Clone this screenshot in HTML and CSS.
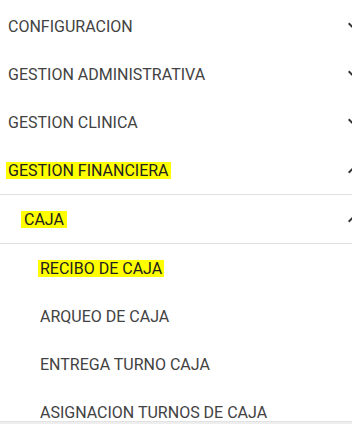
FILE: index.html
```html
<!DOCTYPE html>
<html lang="es">
<head>
    <meta charset="UTF-8">
    <meta name="viewport" content="width=device-width, initial-scale=1.0">
    <title>Menu</title>
    <link rel="stylesheet" href="styles.css">
</head>
<body>

<div class="viewport">
    <nav class="menu">
        <div class="item">
            <span class="label">CONFIGURACION</span>
            <svg class="chevron" viewBox="0 0 24 24"><path d="M16.59 8.59L12 13.17 7.41 8.59 6 10l6 6 6-6z"/></svg>
        </div>
        <div class="item">
            <span class="label">GESTION ADMINISTRATIVA</span>
            <svg class="chevron" viewBox="0 0 24 24"><path d="M16.59 8.59L12 13.17 7.41 8.59 6 10l6 6 6-6z"/></svg>
        </div>
        <div class="item">
            <span class="label">GESTION CLINICA</span>
            <svg class="chevron" viewBox="0 0 24 24"><path d="M16.59 8.59L12 13.17 7.41 8.59 6 10l6 6 6-6z"/></svg>
        </div>
        <div class="item open">
            <span class="label mark">GESTION FINANCIERA</span>
            <svg class="chevron" viewBox="0 0 24 24"><path d="M12 8l-6 6 1.41 1.41L12 10.83l4.59 4.58L18 14z"/></svg>
        </div>

        <div class="item level-2 open">
            <span class="label mark">CAJA</span>
            <svg class="chevron" viewBox="0 0 24 24"><path d="M12 8l-6 6 1.41 1.41L12 10.83l4.59 4.58L18 14z"/></svg>
        </div>

        <div class="item level-3">
            <span class="label mark">RECIBO DE CAJA</span>
        </div>
        <div class="item level-3">
            <span class="label">ARQUEO DE CAJA</span>
        </div>
        <div class="item level-3">
            <span class="label">ENTREGA TURNO CAJA</span>
        </div>
        <div class="item level-3">
            <span class="label">ASIGNACION TURNOS DE CAJA</span>
        </div>
    </nav>
</div>
<div class="bottom-bar"></div>

</body>
</html>
```

FILE: styles.css
```css
body {
    font-family: Roboto, 'Liberation Sans', Arial, sans-serif;
    color: #424242;
    background: #fff;
    margin: 0;
    width: 352px;
    height: 424px;
    overflow: hidden;
}

.viewport {
    height: 421px;
    overflow: hidden;
}

.menu {
    width: 374px;
    padding-top: 2px;
}

.item {
    height: 48px;
    display: flex;
    align-items: center;
    justify-content: space-between;
    padding: 0 8px;
    font-size: 16px;
    line-height: 17px;
}

.item.open {
    border-bottom: 1px solid #e0e0e0;
}

.label {
    padding-top: 1px;
}

.level-2 {
    padding-left: 24px;
}

.level-3 {
    padding-left: 40px;
}

.mark {
    background-color: #ffff00;
    color: #212121;
    margin-left: -2px;
    padding: 0 2px;
}

.level-2 .mark {
    margin-left: -3px;
    padding: 0 3px;
}

.chevron {
    width: 24px;
    height: 24px;
    fill: #333;
    flex-shrink: 0;
}

.bottom-bar {
    height: 3px;
    background: #eeeeee;
    border-top: 1px solid #e2e2e2;
    box-sizing: border-box;
}
```
